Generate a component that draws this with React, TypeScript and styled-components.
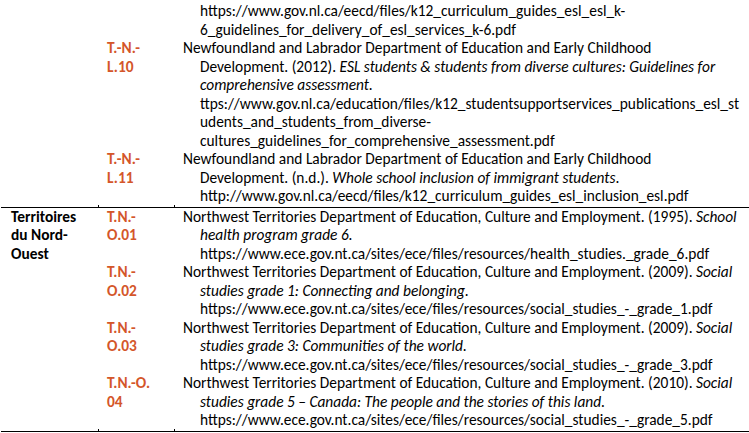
import React from "react";
import styled, { createGlobalStyle } from "styled-components";

const GlobalStyle = createGlobalStyle`
  html, body { margin: 0; padding: 0; background: #fff; }
  body {
    font-family: Carlito, Lato, "Liberation Sans", sans-serif;
    font-size: 15.4px;
    line-height: 18.5px;
    color: #000;
  }
`;

const Table = styled.div`
  width: 749px;
  padding-top: 2px;
  padding-left: 1px;
  box-sizing: border-box;
`;

const Section = styled.div`
  position: relative;
  display: flex;
  padding-bottom: 1px;
  border-bottom: 1px solid #000;
  &::before,
  &::after {
    content: "";
    position: absolute;
    bottom: 0;
    width: 1px;
    height: 2px;
    background: #000;
  }
  &::before { left: 97px; }
  &::after { left: 173px; }
`;

const RegionCell = styled.div`
  width: 98px;
  flex: none;
  box-sizing: border-box;
  padding-left: 10px;
  font-weight: 700;
`;

const Entries = styled.div`
  flex: 1;
  display: flex;
  flex-direction: column;
`;

const Entry = styled.div`
  display: grid;
  grid-template-columns: 76px 1fr;
`;

const Code = styled.div`
  padding-left: 8px;
  font-weight: 700;
  color: #d4562a;
`;

const Ref = styled.div<{ $continued?: boolean }>`
  padding-left: 25px;
  text-indent: ${(p) => (p.$continued ? 0 : -17)}px;
  white-space: nowrap;
`;

type Item = {
  code?: string[];
  lines: React.ReactNode[];
  continued?: boolean;
};

const nl: Item[] = [
  {
    continued: true,
    lines: [
      "https://www.gov.nl.ca/eecd/files/k12_curriculum_guides_esl_esl_k-",
      "6_guidelines_for_delivery_of_esl_services_k-6.pdf",
    ],
  },
  {
    code: ["T.-N.-", "L.10"],
    lines: [
      "Newfoundland and Labrador Department of Education and Early Childhood",
      <>
        Development. (2012). <i>ESL students &amp; students from diverse cultures: Guidelines for</i>
      </>,
      <i>comprehensive assessment.</i>,
      "ttps://www.gov.nl.ca/education/files/k12_studentsupportservices_publications_esl_st",
      "udents_and_students_from_diverse-",
      "cultures_guidelines_for_comprehensive_assessment.pdf",
    ],
  },
  {
    code: ["T.-N.-", "L.11"],
    lines: [
      "Newfoundland and Labrador Department of Education and Early Childhood",
      <>
        Development. (n.d.). <i>Whole school inclusion of immigrant students</i>.
      </>,
      "http://www.gov.nl.ca/eecd/files/k12_curriculum_guides_esl_inclusion_esl.pdf",
    ],
  },
];

const nt: Item[] = [
  {
    code: ["T.N.-", "O.01"],
    lines: [
      <>
        Northwest Territories Department of Education, Culture and Employment. (1995). <i>School</i>
      </>,
      <i>health program grade 6.</i>,
      "https://www.ece.gov.nt.ca/sites/ece/files/resources/health_studies._grade_6.pdf",
    ],
  },
  {
    code: ["T.N.-", "O.02"],
    lines: [
      <>
        Northwest Territories Department of Education, Culture and Employment. (2009). <i>Social</i>
      </>,
      <i>studies grade 1: Connecting and belonging.</i>,
      "https://www.ece.gov.nt.ca/sites/ece/files/resources/social_studies_-_grade_1.pdf",
    ],
  },
  {
    code: ["T.N.-", "O.03"],
    lines: [
      <>
        Northwest Territories Department of Education, Culture and Employment. (2009). <i>Social</i>
      </>,
      <i>studies grade 3: Communities of the world.</i>,
      "https://www.ece.gov.nt.ca/sites/ece/files/resources/social_studies_-_grade_3.pdf",
    ],
  },
  {
    code: ["T.N.-O.", "04"],
    lines: [
      <>
        Northwest Territories Department of Education, Culture and Employment. (2010). <i>Social</i>
      </>,
      <i>studies grade 5 – Canada: The people and the stories of this land.</i>,
      "https://www.ece.gov.nt.ca/sites/ece/files/resources/social_studies_-_grade_5.pdf",
    ],
  },
];

function Lines({ items }: { items: React.ReactNode[] }) {
  return (
    <>
      {items.map((l, i) => (
        <React.Fragment key={i}>
          {i > 0 && <br />}
          {l}
        </React.Fragment>
      ))}
    </>
  );
}

function EntryList({ items }: { items: Item[] }) {
  return (
    <Entries>
      {items.map((it, i) => (
        <Entry key={i}>
          <Code>{it.code && <Lines items={it.code} />}</Code>
          <Ref $continued={it.continued}>
            <Lines items={it.lines} />
          </Ref>
        </Entry>
      ))}
    </Entries>
  );
}

export default function App() {
  return (
    <>
      <GlobalStyle />
      <Table>
        <Section>
          <RegionCell />
          <EntryList items={nl} />
        </Section>
        <Section>
          <RegionCell>
            Territoires
            <br />
            du Nord-
            <br />
            Ouest
          </RegionCell>
          <EntryList items={nt} />
        </Section>
      </Table>
    </>
  );
}
